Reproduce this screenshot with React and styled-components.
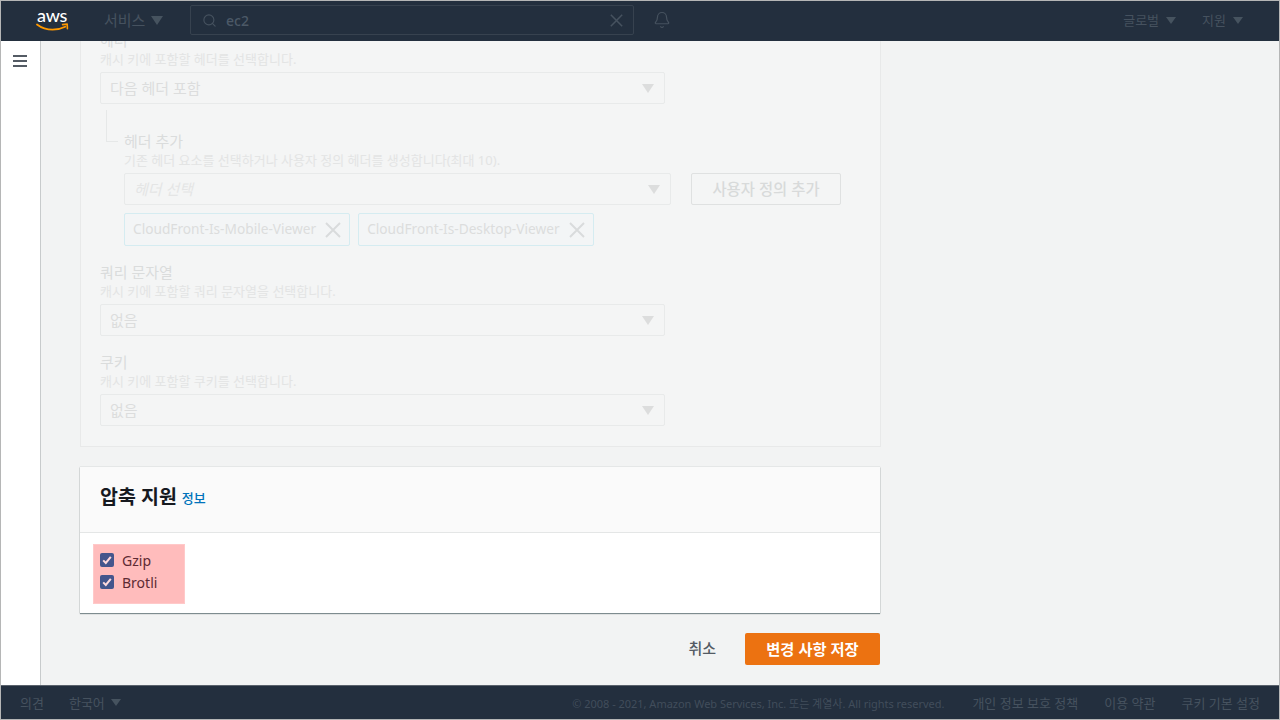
import styled, { createGlobalStyle } from "styled-components";
import { Search, Bell } from "lucide-react";

const FONT = `"Noto Sans", "Noto Sans CJK KR", sans-serif`;

const GlobalStyle = createGlobalStyle`
  html, body {
    margin: 0;
    padding: 0;
    background: #fff;
  }
  * {
    box-sizing: border-box;
  }
`;

function AwsLogo() {
  return (
    <svg width="40" height="24" viewBox="0 0 40 24">
      <text x="1" y="14" fontFamily="Lato, sans-serif" fontSize="18" fontWeight="500" fill="#fff" letterSpacing="-0.3">
        aws
      </text>
      <path d="M1 16.5c4.6 3.5 10 5.2 15.6 5.2 4.2 0 8.6-1 12.6-3" fill="none" stroke="#f90" strokeWidth="1.8" strokeLinecap="round" />
      <path d="M26.6 16.6l4.6-.5.2 4.6" fill="none" stroke="#f90" strokeWidth="1.6" strokeLinecap="round" strokeLinejoin="round" />
    </svg>
  );
}

function CloseIcon({ size, color }) {
  return (
    <svg width={size} height={size} viewBox="0 0 16 16" style={{ flex: "none" }}>
      <path d="M1 1l14 14M15 1L1 15" fill="none" stroke={color} strokeWidth="1.9" />
    </svg>
  );
}

function Field({ label, hint, value }) {
  return (
    <FieldWrap>
      <Label>{label}</Label>
      <Hint>{hint}</Hint>
      <Select $width={565}>
        <SelectText>{value}</SelectText>
        <Caret $color="#dcdddd" />
      </Select>
    </FieldWrap>
  );
}

function Token({ name }) {
  return (
    <TokenBox>
      <TokenText>{name}</TokenText>
      <CloseIcon size={16} color="#d9dbdc" />
    </TokenBox>
  );
}

function CheckBox() {
  return (
    <CheckSquare>
      <svg width="10" height="10" viewBox="0 0 10 10">
        <path d="M1.2 5.4l2.6 2.6 5-6.2" fill="none" stroke="#ffd9dc" strokeWidth="2" />
      </svg>
    </CheckSquare>
  );
}

export default function App() {
  return (
    <Frame>
      <GlobalStyle />
      <Header>
        <LogoSlot>
          <AwsLogo />
        </LogoSlot>
        <NavItem>
          서비스
          <Caret $color="#46535f" $size={6} />
        </NavItem>
        <SearchBox>
          <Search size={15} strokeWidth={1.8} color="#46525f" />
          <SearchText>ec2</SearchText>
          <CloseIcon size={13} color="#46525f" />
        </SearchBox>
        <BellSlot>
          <Bell size={18} strokeWidth={1.6} color="#46525f" />
        </BellSlot>
        <HeaderRight>
          <HeaderLink>
            글로벌
            <Caret $color="#46535f" $size={5} />
          </HeaderLink>
          <HeaderLink>
            지원
            <Caret $color="#46535f" $size={5} />
          </HeaderLink>
        </HeaderRight>
      </Header>

      <Body>
        <Sidebar>
          <Burger>
            <span />
            <span />
            <span />
          </Burger>
        </Sidebar>
        <Main>
          <Column>
            <FadedPanel>
              <Field label="헤더" hint="캐시 키에 포함할 헤더를 선택합니다." value="다음 헤더 포함" />
              <SubField>
                <TreeLine />
                <SubBody>
                  <Label>헤더 추가</Label>
                  <Hint>기존 헤더 요소를 선택하거나 사용자 정의 헤더를 생성합니다(최대 10).</Hint>
                  <SelectRow>
                    <Select $width={547}>
                      <Placeholder>헤더 선택</Placeholder>
                      <Caret $color="#dcdddd" />
                    </Select>
                    <GhostButton>사용자 정의 추가</GhostButton>
                  </SelectRow>
                  <TokenRow>
                    <Token name="CloudFront-Is-Mobile-Viewer" />
                    <Token name="CloudFront-Is-Desktop-Viewer" />
                  </TokenRow>
                </SubBody>
              </SubField>
              <Field label="쿼리 문자열" hint="캐시 키에 포함할 쿼리 문자열을 선택합니다." value="없음" />
              <Field label="쿠키" hint="캐시 키에 포함할 쿠키를 선택합니다." value="없음" />
            </FadedPanel>

            <Card>
              <CardHeader>
                <CardTitle>압축 지원</CardTitle>
                <InfoLink>정보</InfoLink>
              </CardHeader>
              <CardBody>
                <Highlight>
                  <CheckRow>
                    <CheckBox />
                    Gzip
                  </CheckRow>
                  <CheckRow>
                    <CheckBox />
                    Brotli
                  </CheckRow>
                </Highlight>
              </CardBody>
            </Card>

            <Actions>
              <CancelButton>취소</CancelButton>
              <SaveButton>변경 사항 저장</SaveButton>
            </Actions>
          </Column>
        </Main>
      </Body>

      <Footer>
        <FooterLeft>
          <span>의견</span>
          <FooterLang>
            한국어
            <Caret $color="#46535f" $size={5} />
          </FooterLang>
        </FooterLeft>
        <FooterRight>
          <Copyright>© 2008 - 2021, Amazon Web Services, Inc. 또는 계열사. All rights reserved.</Copyright>
          <FooterLink>개인 정보 보호 정책</FooterLink>
          <FooterLink>이용 약관</FooterLink>
          <FooterLink>쿠키 기본 설정</FooterLink>
        </FooterRight>
      </Footer>
    </Frame>
  );
}

const Frame = styled.div`
  width: 1280px;
  height: 720px;
  border: 1px solid #b5b6b6;
  display: flex;
  flex-direction: column;
  overflow: hidden;
  font-family: ${FONT};
  background: #f2f3f3;
`;

const Caret = styled.i`
  flex: none;
  width: 0;
  height: 0;
  border-left: ${(p) => p.$size || 6}px solid transparent;
  border-right: ${(p) => p.$size || 6}px solid transparent;
  border-top: ${(p) => (p.$size || 6) * 1.5}px solid ${(p) => p.$color};
`;

const Header = styled.header`
  height: 40px;
  flex: none;
  background: #232f3e;
  display: flex;
  align-items: center;
  padding-bottom: 2px;
  color: #46525f;
  font-size: 15px;
`;

const LogoSlot = styled.div`
  width: 103px;
  padding-left: 35px;
  display: flex;
  align-items: center;
`;

const NavItem = styled.div`
  width: 86px;
  display: flex;
  align-items: center;
  gap: 6px;
  padding-bottom: 2px;

  ${Caret} {
    margin-top: 2px;
  }
`;

const SearchBox = styled.div`
  width: 444px;
  height: 30px;
  border: 1px solid #37424f;
  border-radius: 2px;
  display: flex;
  align-items: center;
  padding: 0 10px 0 11px;
`;

const SearchText = styled.span`
  flex: 1;
  margin-left: 9px;
  font-size: 14px;
  font-weight: 500;
  color: #4c5967;
`;

const BellSlot = styled.div`
  margin-left: 19px;
  display: flex;
`;

const HeaderRight = styled.div`
  margin-left: auto;
  padding-right: 36px;
  display: flex;
  gap: 26px;
`;

const HeaderLink = styled.div`
  display: flex;
  align-items: center;
  gap: 7px;
  font-size: 13px;
  padding-bottom: 2px;

  ${Caret} {
    margin-top: 3px;
  }
`;

const Body = styled.div`
  flex: 1;
  min-height: 0;
  display: flex;
`;

const Sidebar = styled.aside`
  width: 40px;
  flex: none;
  background: #fff;
  border-right: 1px solid #c8cbcc;
  padding: 14px 0 0 12px;
`;

const Burger = styled.div`
  width: 14px;
  display: flex;
  flex-direction: column;
  gap: 3px;

  span {
    height: 2px;
    background: #545b64;
  }
`;

const Main = styled.main`
  flex: 1;
  min-width: 0;
  overflow: hidden;
  padding-left: 39px;
`;

const Column = styled.div`
  width: 801px;
  margin-top: -11px;
`;

const FadedPanel = styled.section`
  background: #f4f5f5;
  border: 1px solid #e8e9e9;
  border-top: 0;
  padding: 0 20px 20px 19px;
`;

const FieldWrap = styled.div`
  display: flex;
  flex-direction: column;
  margin-top: 15px;

  &:first-child {
    margin-top: 0;
  }

  & + & {
    margin-top: 16px;
  }
`;

const Label = styled.div`
  font-size: 15px;
  line-height: 21px;
  color: #dadcdc;
`;

const Hint = styled.div`
  font-size: 13px;
  line-height: 17px;
  color: #e3e4e4;
`;

const Select = styled.div`
  width: ${(p) => p.$width}px;
  height: 32px;
  margin-top: 4px;
  border: 1px solid #e8eaea;
  border-radius: 2px;
  display: flex;
  align-items: center;
  justify-content: space-between;
  padding: 0 10px 0 9px;
`;

const SelectText = styled.span`
  font-size: 15px;
  margin-top: -2px;
  color: #dcdddd;
`;

const Placeholder = styled(SelectText)`
  font-style: italic;
  color: #e4e5e5;
`;

const SubField = styled.div`
  display: flex;
  margin-top: 6px;
`;

const TreeLine = styled.div`
  width: 12px;
  height: 32px;
  margin: 0 6px;
  flex: none;
  border-left: 1px solid #e6e8e8;
  border-bottom: 1px solid #e6e8e8;
`;

const SubBody = styled.div`
  margin: 21px 0 1px;
  min-width: 0;
`;

const SelectRow = styled.div`
  display: flex;
  align-items: flex-end;
  gap: 20px;
`;

const GhostButton = styled.div`
  width: 150px;
  height: 32px;
  border: 1px solid #dfe1e1;
  border-radius: 2px;
  padding-bottom: 2px;
  display: flex;
  align-items: center;
  justify-content: center;
  font-size: 15.4px;
  font-weight: 500;
  color: #d8dada;
`;

const TokenRow = styled.div`
  display: flex;
  gap: 8px;
  margin-top: 8px;
`;

const TokenBox = styled.div`
  height: 33px;
  padding: 0 8px;
  display: flex;
  align-items: center;
  gap: 9px;
  background: #f3f5f6;
  border: 1px solid #d5ecf1;
  border-radius: 2px;
`;

const TokenText = styled.span`
  font-size: 13.7px;
  margin-top: -2px;
  color: #dcdddd;
`;

const Card = styled.section`
  margin-top: 20px;
  width: 800px;
  background: #fff;
  box-shadow: 0 1px 1px 0 rgba(0, 28, 36, 0.45), 0 0 1px 0 rgba(0, 28, 36, 0.3);
`;

const CardHeader = styled.div`
  height: 66px;
  background: #fafafa;
  border-bottom: 1px solid #e4e6e6;
  padding: 0 20px 9px;
  display: flex;
  align-items: center;
  gap: 5px;
`;

const CardTitle = styled.h2`
  margin: 0;
  font-size: 19.5px;
  font-weight: 700;
  color: #16191f;
`;

const InfoLink = styled.a`
  font-size: 13px;
  font-weight: 500;
  color: #0073bb;
  margin-top: 4px;
`;

const CardBody = styled.div`
  height: 80px;
  padding: 11px 13px;
`;

const Highlight = styled.div`
  width: 92px;
  height: 60px;
  padding: 4px 6px;
  background: #ffbcbc;
  border: 1px solid #ffc9c9;
`;

const CheckRow = styled.label`
  height: 22px;
  display: flex;
  align-items: center;
  gap: 8px;
  font-size: 14px;
  color: #5d2a33;
`;

const CheckSquare = styled.span`
  width: 14px;
  height: 14px;
  border-radius: 2px;
  background: #44558c;
  display: flex;
  align-items: center;
  justify-content: center;
`;

const Actions = styled.div`
  width: 800px;
  margin-top: 20px;
  display: flex;
  justify-content: flex-end;
  align-items: center;
  gap: 29px;
`;

const CancelButton = styled.span`
  font-size: 15px;
  font-weight: 500;
  margin-bottom: 3px;
  color: #545b64;
`;

const SaveButton = styled.div`
  width: 135px;
  height: 32px;
  background: #ec7211;
  border-radius: 2px;
  padding-bottom: 2px;
  color: #fff;
  font-size: 15.3px;
  font-weight: 700;
  display: flex;
  align-items: center;
  justify-content: center;
`;

const Footer = styled.footer`
  height: 34px;
  flex: none;
  background: #232f3e;
  border-top: 1px solid #5a626c;
  display: flex;
  align-items: center;
  padding: 0 19px;
  color: #46525f;
`;

const FooterLeft = styled.div`
  display: flex;
  align-items: center;
  gap: 25px;
  font-size: 13px;
`;

const FooterLang = styled.div`
  display: flex;
  align-items: center;
  gap: 6px;
`;

const FooterRight = styled.div`
  margin-left: auto;
  display: flex;
  align-items: center;
  gap: 26px;
  font-size: 13px;
`;

const FooterLink = styled.span`
  white-space: nowrap;
`;

const Copyright = styled.span`
  font-size: 11px;
  letter-spacing: -0.02px;
  color: #414d5b;
  margin-right: 2px;
`;
